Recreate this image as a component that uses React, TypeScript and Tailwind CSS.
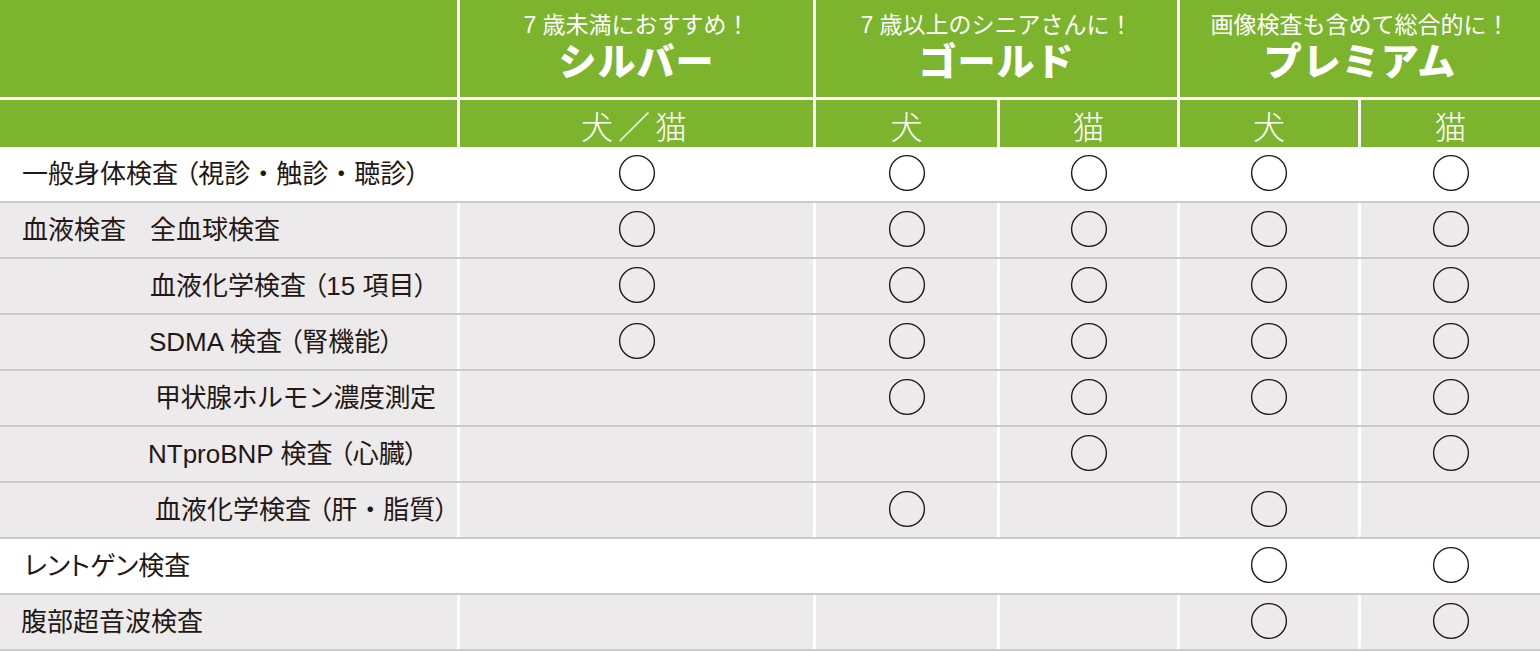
import type { ReactNode } from 'react';

const cols = 'grid grid-cols-[457px_353px_181px_177px_178px_179px] gap-x-[3px]';

type Row = {
  label: ReactNode;
  marks: boolean[]; // silver, gold dog, gold cat, premium dog, premium cat
  white?: boolean;
};

// proportional full-width parenthesis
function P({ c }: { c: string }) {
  return <span className="[font-feature-settings:'palt']">{c}</span>;
}

const rows: Row[] = [
  {
    label: (
      <span className="pl-[22px]">
        一般身体検査 <P c="（" />視診・触診・聴診<P c="）" />
      </span>
    ),
    marks: [true, true, true, true, true],
    white: true,
  },
  {
    label: (
      <span className="flex pl-[22px]">
        <span className="w-[128px]">血液検査</span>
        <span>全血球検査</span>
      </span>
    ),
    marks: [true, true, true, true, true],
  },
  {
    label: (
      <span className="pl-[150px]">
        血液化学検査 <P c="（" />15 項目<P c="）" />
      </span>
    ),
    marks: [true, true, true, true, true],
  },
  {
    label: (
      <span className="pl-[149px]">
        SDMA 検査 <P c="（" />腎機能<P c="）" />
      </span>
    ),
    marks: [true, true, true, true, true],
  },
  { label: <span className="pl-[155px] tracking-[-0.5px]">甲状腺ホルモン濃度測定</span>, marks: [false, true, true, true, true] },
  {
    label: (
      <span className="pl-[148px]">
        NTproBNP 検査 <P c="（" />心臓<P c="）" />
      </span>
    ),
    marks: [false, false, true, false, true],
  },
  {
    label: (
      <span className="pl-[155px]">
        血液化学検査 <P c="（" />肝・脂質<P c="）" />
      </span>
    ),
    marks: [false, true, false, true, false],
  },
  {
    label: <span className="pl-[24px] [font-feature-settings:'palt']">レントゲン検査</span>,
    marks: [false, false, false, true, true],
    white: true,
  },
  { label: <span className="pl-[21px]">腹部超音波検査</span>, marks: [false, false, false, true, true] },
];

function Circle() {
  return (
    <svg width="38" height="38" viewBox="0 0 38 38" className="-mt-[2px]" aria-hidden="true">
      <circle cx="19" cy="19" r="17.4" fill="none" stroke="#231815" strokeWidth="1.4" />
    </svg>
  );
}

function PlanHead({ lead, name, className = '' }: { lead: string; name: string; className?: string }) {
  return (
    <div className={`flex flex-col items-center bg-[#7cb42e] pt-[13px] text-white ${className}`}>
      <div className="text-[23px] leading-[24px]">{lead}</div>
      <div className="mt-[5px] text-[38px] font-black leading-[40px] tracking-[1px]">{name}</div>
    </div>
  );
}

function SubHead({ children }: { children: ReactNode }) {
  return (
    <div className="flex items-center justify-center bg-[#7cb42e] pt-[9px] text-[32px] font-light leading-none text-white">
      {children}
    </div>
  );
}

export default function App() {
  return (
    <div
      className="w-[1540px] bg-white text-[#231815]"
      style={{ fontFamily: '"Liberation Sans", "Noto Sans CJK JP", sans-serif' }}
    >
      <header className={`${cols} grid-rows-[97px_47px] gap-y-[3px]`}>
        <div className="bg-[#7cb42e]" />
        <PlanHead lead="7 歳未満におすすめ！" name="シルバー" />
        <PlanHead lead="7 歳以上のシニアさんに！" name="ゴールド" className="col-span-2" />
        <PlanHead lead="画像検査も含めて総合的に！" name="プレミアム" className="col-span-2" />

        <div className="bg-[#7cb42e]" />
        <SubHead>
          <span className="tracking-[5px]">犬／猫</span>
        </SubHead>
        <SubHead>犬</SubHead>
        <SubHead>猫</SubHead>
        <SubHead>犬</SubHead>
        <SubHead>猫</SubHead>
      </header>

      {rows.map((row, i) => {
        const cell = row.white ? 'bg-white' : 'bg-[#edeaeb]';
        return (
          <div key={i} className={`${cols} h-[56px] border-b-2 border-[#cacaca]`}>
            <div className={`${cell} flex items-center text-[26px] leading-none`}>{row.label}</div>
            {row.marks.map((on, j) => (
              <div key={j} className={`${cell} flex items-center justify-center`}>
                {on && <Circle />}
              </div>
            ))}
          </div>
        );
      })}
    </div>
  );
}
